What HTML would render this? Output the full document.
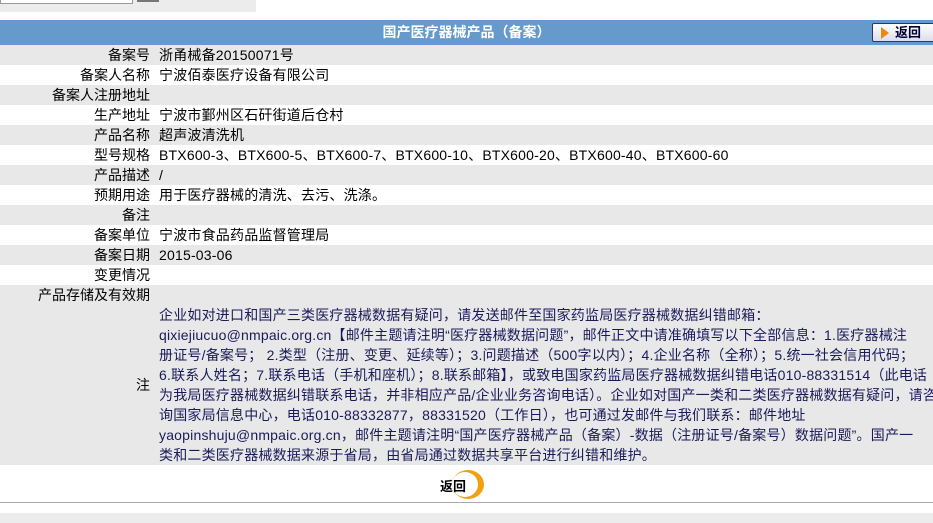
<!DOCTYPE html>
<html><head><meta charset="utf-8"><style>
body{margin:0;width:933px;height:523px;overflow:hidden;background:#fff;font-family:"Liberation Sans","Noto Sans CJK SC",sans-serif;font-size:14px;color:#000;position:relative}
.top{position:absolute;left:0;top:0;width:256px;height:12px;background:#ececec}
.inp{position:absolute;left:0;top:-2px;width:131px;height:4px;background:#fff;border:1px solid #999}
.btn{position:absolute;left:137px;top:0;width:22px;height:2px;background:#777}
.hdr{position:absolute;left:0;top:20px;width:933px;height:25px;background:#6699cc;color:#fff;font-weight:bold;text-align:center;line-height:25px;font-size:14px}
.back{position:absolute;left:872px;top:23px;width:70px;height:17px;background:linear-gradient(#fff,#dde);border:1px solid #336;border-radius:2px;color:#003;font-weight:bold;line-height:17px;font-size:13px}
.back i{display:inline-block;width:0;height:0;border-left:8px solid #e88a10;border-top:6px solid transparent;border-bottom:6px solid transparent;margin:0 6px 0 8px;vertical-align:-2px;position:relative}
.row{position:absolute;left:0;width:933px;height:20px;line-height:20px;white-space:nowrap;overflow:hidden}
.g{background:#e8e8e8}
.l{position:absolute;right:783px;top:0}
.v{position:absolute;left:159px;top:0;letter-spacing:0.2px}
.note{position:absolute;left:0;top:305px;width:933px;height:160px;background:#e8e8e8;overflow:hidden}
.note .t{position:absolute;left:159px;top:0;line-height:20px;white-space:nowrap;color:#1a1a5a;letter-spacing:0.2px}
.note .l{top:70px;line-height:20px}
.rb{position:absolute;left:440px;top:476px;font-weight:bold;font-size:13px}
.circ{position:absolute;left:452px;top:470px;width:32px;height:29px;border-radius:50%;background:#f0a010}
.circ:after{content:"";position:absolute;left:0;top:2px;width:26px;height:25px;border-radius:50%;background:#fff}
.hr{position:absolute;left:0;top:502px;width:933px;height:1px;background:#aaa}
.bot{position:absolute;left:0;top:513px;width:933px;height:10px;background:#ececec}
</style></head><body>
<div class="top"><div class="inp"></div><div class="btn"></div></div>
<div class="hdr">国产医疗器械产品（备案）</div>
<div class="back"><i></i>返回</div>
<div class="row g" style="top:45px"><span class="l">备案号</span><span class="v">浙甬械备20150071号</span></div>
<div class="row" style="top:65px"><span class="l">备案人名称</span><span class="v">宁波佰泰医疗设备有限公司</span></div>
<div class="row g" style="top:85px"><span class="l">备案人注册地址</span></div>
<div class="row" style="top:105px"><span class="l">生产地址</span><span class="v">宁波市鄞州区石矸街道后仓村</span></div>
<div class="row g" style="top:125px"><span class="l">产品名称</span><span class="v">超声波清洗机</span></div>
<div class="row" style="top:145px"><span class="l">型号规格</span><span class="v">BTX600-3、BTX600-5、BTX600-7、BTX600-10、BTX600-20、BTX600-40、BTX600-60</span></div>
<div class="row g" style="top:165px"><span class="l">产品描述</span><span class="v">/</span></div>
<div class="row" style="top:185px"><span class="l">预期用途</span><span class="v">用于医疗器械的清洗、去污、洗涤。</span></div>
<div class="row g" style="top:205px"><span class="l">备注</span></div>
<div class="row" style="top:225px"><span class="l">备案单位</span><span class="v">宁波市食品药品监督管理局</span></div>
<div class="row g" style="top:245px"><span class="l">备案日期</span><span class="v">2015-03-06</span></div>
<div class="row" style="top:265px"><span class="l">变更情况</span></div>
<div class="row g" style="top:285px"><span class="l">产品存储及有效期</span></div>
<div class="note"><span class="l">注</span><div class="t">企业如对进口和国产三类医疗器械数据有疑问，请发送邮件至国家药监局医疗器械数据纠错邮箱：<br>qixiejiucuo@nmpaic.org.cn【邮件主题请注明“医疗器械数据问题”，邮件正文中请准确填写以下全部信息：1.医疗器械注<br>册证号/备案号； 2.类型（注册、变更、延续等）；3.问题描述（500字以内）；4.企业名称（全称）；5.统一社会信用代码；<br>6.联系人姓名；7.联系电话（手机和座机）；8.联系邮箱】，或致电国家药监局医疗器械数据纠错电话010-88331514（此电话<br>为我局医疗器械数据纠错联系电话，并非相应产品/企业业务咨询电话）。企业如对国产一类和二类医疗器械数据有疑问，请咨<br>询国家局信息中心，电话010-88332877，88331520（工作日），也可通过发邮件与我们联系：邮件地址<br>yaopinshuju@nmpaic.org.cn，邮件主题请注明“国产医疗器械产品（备案）-数据（注册证号/备案号）数据问题”。国产一<br>类和二类医疗器械数据来源于省局，由省局通过数据共享平台进行纠错和维护。</div></div>
<div class="circ"></div>
<div class="rb">返回</div>
<div class="hr"></div>
<div class="bot"></div>
</body></html>
